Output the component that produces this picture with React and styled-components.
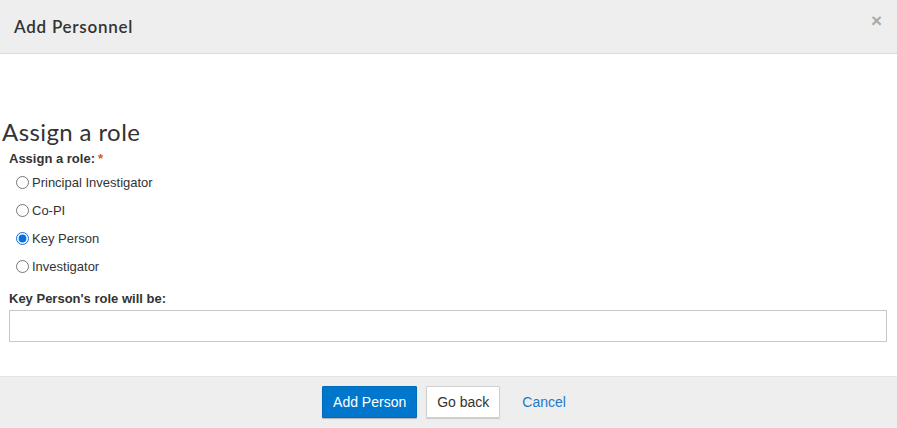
import React from "react";
import styled, { createGlobalStyle } from "styled-components";

const Global = createGlobalStyle`
  html, body { margin: 0; padding: 0; background: #fff; }
  body { font-family: "Liberation Sans", Arial, sans-serif; color: #333; }
  * { box-sizing: border-box; }
`;

const Modal = styled.div`
  width: 897px;
  height: 428px;
  display: flex;
  flex-direction: column;
  background: #fff;
`;

const Header = styled.div`
  height: 54px;
  flex: none;
  background: #eeeeee;
  border-bottom: 1px solid #dcdcdc;
  display: flex;
  align-items: center;
  justify-content: space-between;
  padding: 0 15px 0 14px;
`;

const Title = styled.h1`
  margin: 0;
  font-family: "Lato", sans-serif;
  font-size: 17px;
  font-weight: 600;
  color: #333;
  letter-spacing: 0.75px;
`;

const Close = styled.button`
  border: 0;
  background: none;
  padding: 0;
  margin-top: -12px;
  color: #aaa;
  font-family: "Liberation Sans", Arial, sans-serif;
  font-size: 19px;
  font-weight: 700;
  line-height: 1;
  cursor: pointer;
`;

const Body = styled.div`
  flex: 1;
  padding: 0 11px 0 9px;
  display: flex;
  flex-direction: column;
`;

const Heading = styled.h2`
  margin: 64px 0 0 -7px;
  font-family: "Lato", sans-serif;
  font-size: 24px;
  font-weight: 400;
  line-height: 28px;
  letter-spacing: 0.4px;
  color: #333;
`;

const FieldLabel = styled.div`
  margin-top: ${(p) => p.$top}px;
  font-size: 13px;
  font-weight: 700;
  line-height: 16px;
  color: #333;
`;

const Req = styled.span`
  color: #e0522c;
  margin-left: 3px;
`;

const RadioList = styled.div`
  display: flex;
  flex-direction: column;
  margin-top: 1px;
`;

const RadioRow = styled.label`
  height: 28px;
  display: flex;
  align-items: center;
  font-size: 13px;
  color: #333;
  cursor: pointer;
`;

const Radio = styled.input`
  width: 13px;
  height: 13px;
  margin: 0 3px 0 7px;
  accent-color: #0a6fe0;
`;

const TextInput = styled.input`
  margin-top: 3px;
  width: 878px;
  height: 32px;
  border: 1px solid #c8c8c8;
  border-radius: 0;
  padding: 0 8px;
  font-size: 13px;
  outline: none;
`;

const Footer = styled.div`
  height: 52px;
  flex: none;
  background: #eeeeee;
  border-top: 1px solid #e4e4e4;
  display: flex;
  align-items: center;
  justify-content: center;
  gap: 9px;
  padding: 0 0 1px 4px;
`;

const Button = styled.button`
  height: 32px;
  padding: 0 ${(p) => (p.$variant === "link" ? "12px" : "10px")};
  font-family: "Liberation Sans", Arial, sans-serif;
  font-size: 14px;
  cursor: pointer;
  border-radius: 1px;
  ${(p) =>
    p.$variant === "primary"
      ? `background: #0077cc; color: #fff; border: 1px solid #006bb8; box-shadow: 0 1px 1px rgba(0,0,0,0.25);`
      : p.$variant === "link"
      ? `background: none; color: #1f78c8; border: 1px solid transparent;`
      : `background: #fff; color: #333; border: 1px solid #cfcfcf; box-shadow: 0 1px 1px rgba(0,0,0,0.15);`}
`;

const roles = ["Principal Investigator", "Co-PI", "Key Person", "Investigator"];

export default function App() {
  const [role, setRole] = React.useState("Key Person");
  return (
    <>
      <Global />
      <Modal>
        <Header>
          <Title>Add Personnel</Title>
          <Close aria-label="Close">×</Close>
        </Header>
        <Body>
          <Heading>Assign a role</Heading>
          <FieldLabel $top={5}>
            Assign a role:<Req>*</Req>
          </FieldLabel>
          <RadioList>
            {roles.map((r) => (
              <RadioRow key={r}>
                <Radio
                  type="radio"
                  name="role"
                  checked={role === r}
                  onChange={() => setRole(r)}
                />
                {r}
              </RadioRow>
            ))}
          </RadioList>
          <FieldLabel $top={11}>Key Person's role will be:</FieldLabel>
          <TextInput type="text" />
        </Body>
        <Footer>
          <Button $variant="primary">Add Person</Button>
          <Button>Go back</Button>
          <Button $variant="link">Cancel</Button>
        </Footer>
      </Modal>
    </>
  );
}
